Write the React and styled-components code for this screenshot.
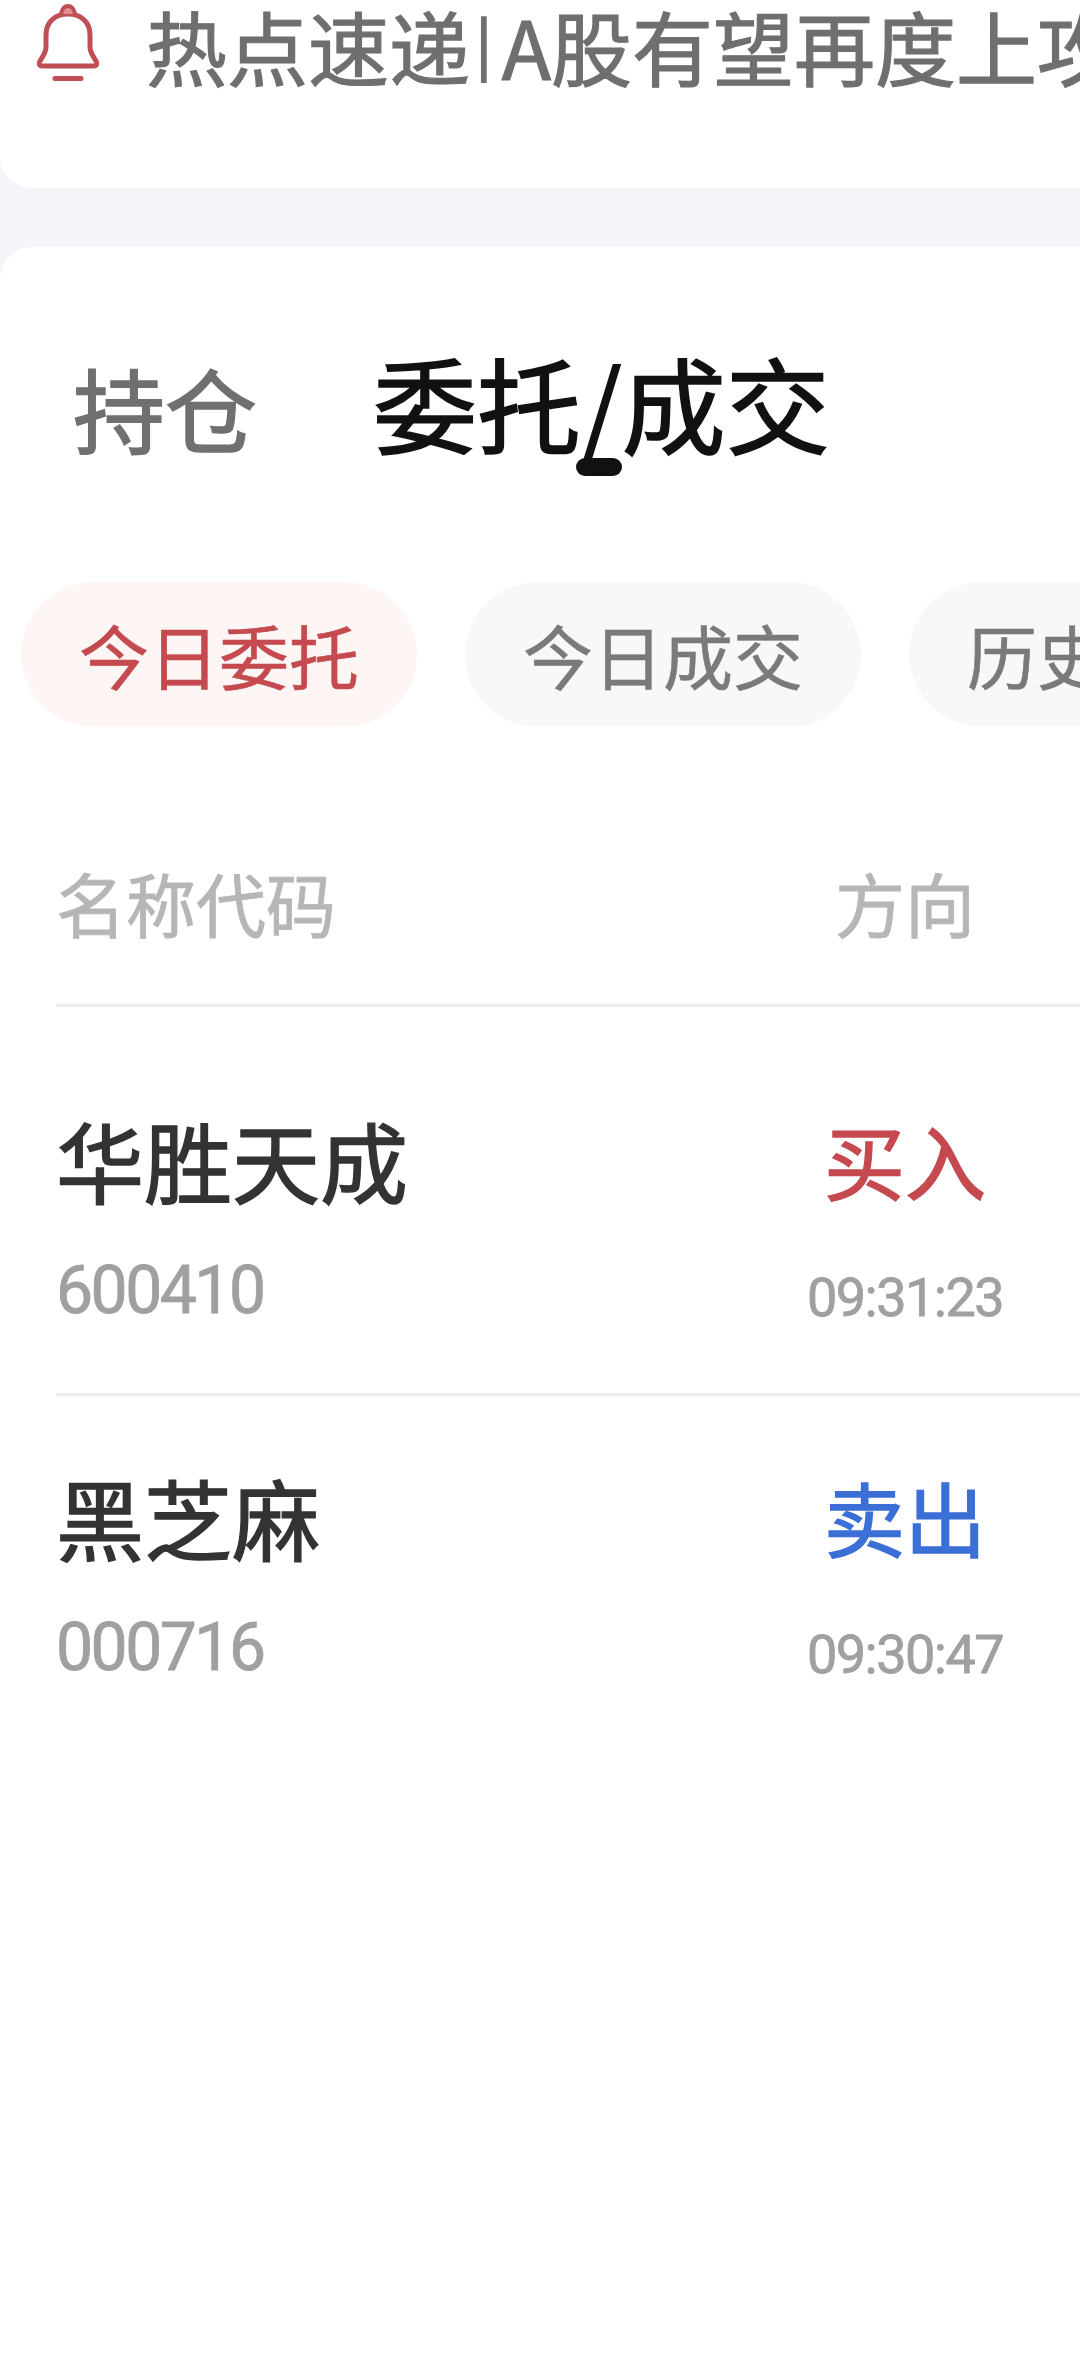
import styled, { createGlobalStyle } from 'styled-components';

const GlobalStyle = createGlobalStyle`
  html, body {
    margin: 0;
    padding: 0;
    background: #fff;
  }
  body {
    font-family: "Noto Sans CJK SC", "Noto Sans", sans-serif;
  }
`;

const Page = styled.div`
  width: 1080px;
  height: 2376px;
  overflow: hidden;
  background: #f3f5f9;
`;

const NoticeCard = styled.div`
  width: 1400px;
  height: 188px;
  box-sizing: border-box;
  padding: 3px 0 0 36px;
  display: flex;
  align-items: flex-start;
  gap: 46px;
  background: #fff;
  border-radius: 0 0 32px 32px;
`;

const Bell = styled.svg`
  width: 64px;
  height: 80px;
  flex: none;
`;

const NoticeText = styled.div`
  font-size: 81px;
  line-height: 84px;
  color: #6f6f6f;
  white-space: nowrap;
  -webkit-text-stroke: 1.2px #6f6f6f;
`;

const NoticeBar = styled.span`
  font-size: 58px;
  line-height: 0;
  margin: 0 10px 0 6px;
  vertical-align: 14px;
  -webkit-text-stroke: 2px #6f6f6f;
`;

const MainCard = styled.div`
  width: 1400px;
  height: 2200px;
  margin-top: 59px;
  background: #fff;
  border-radius: 32px 32px 0 0;
`;

const TabBar = styled.div`
  display: flex;
  align-items: baseline;
  gap: 116px;
  padding: 90px 0 0 73px;
  height: 335px;
  box-sizing: border-box;
`;

const Tab = styled.div`
  position: relative;
  font-size: ${(p) => (p.$active ? '104px' : '92px')};
  line-height: 130px;
  color: ${(p) => (p.$active ? '#111' : '#707070')};
  -webkit-text-stroke: 1.5px ${(p) => (p.$active ? '#111' : '#707070')};
`;

const Indicator = styled.span`
  position: absolute;
  left: 203px;
  bottom: -9px;
  width: 46px;
  height: 18px;
  border-radius: 9px;
  background: #111;
`;

const PillRow = styled.div`
  display: flex;
  gap: 48px;
  padding-left: 21px;
`;

const Pill = styled.div`
  flex: none;
  width: 396px;
  height: 145px;
  border-radius: 73px;
  display: flex;
  align-items: center;
  justify-content: center;
  font-size: 70px;
  background: ${(p) => (p.$active ? '#fdf6f4' : '#f8f8f8')};
  color: ${(p) => (p.$active ? '#c54a50' : '#7a7a7a')};
  -webkit-text-stroke: 0.6px ${(p) => (p.$active ? '#c54a50' : '#7a7a7a')};
`;

const Table = styled.div`
  margin: 98px 0 0 56px;
`;

const HeaderRow = styled.div`
  display: grid;
  grid-template-columns: 739px 220px;
  height: 182px;
  box-sizing: border-box;
  border-bottom: 3px solid #eeeeee;
  font-size: 70px;
  line-height: 156px;
  color: #b6b6b6;
  -webkit-text-stroke: 0.8px #b6b6b6;
`;

const Row = styled.div`
  display: grid;
  grid-template-columns: 739px 220px;
  height: ${(p) => p.$height}px;
  box-sizing: border-box;
  padding-top: ${(p) => p.$top}px;
  border-bottom: ${(p) => (p.$line ? '3px solid #eeeeee' : 'none')};
`;

const Cell = styled.div`
  display: flex;
  flex-direction: column;
`;

const DirectionCell = styled.div`
  display: flex;
  flex-direction: column;
  align-items: center;
`;

const HeadDirection = styled.div`
  text-align: center;
`;

const Name = styled.div`
  font-size: 88px;
  line-height: 100px;
  color: #333;
  -webkit-text-stroke: 1.4px #333;
`;

const Code = styled.div`
  margin-top: 46px;
  font-family: Roboto, "Liberation Sans", sans-serif;
  font-size: 66px;
  line-height: 72px;
  letter-spacing: -2.5px;
  color: #a0a0a0;
  -webkit-text-stroke: 0.8px #a0a0a0;
`;

const Direction = styled.div`
  font-size: 81px;
  line-height: 100px;
  color: ${(p) => (p.$side === 'buy' ? '#c54a50' : '#3b6fd6')};
  -webkit-text-stroke: 1.4px ${(p) => (p.$side === 'buy' ? '#c54a50' : '#3b6fd6')};
`;

const Time = styled.div`
  margin-top: 59px;
  font-family: Roboto, "Liberation Sans", sans-serif;
  font-size: 54px;
  line-height: 60px;
  letter-spacing: -1.5px;
  color: #a0a0a0;
  -webkit-text-stroke: 0.8px #a0a0a0;
`;

const orders = [
  { name: '华胜天成', code: '600410', side: 'buy', label: '买入', time: '09:31:23', height: 389, top: 102, line: true },
  { name: '黑芝麻', code: '000716', side: 'sell', label: '卖出', time: '09:30:47', height: 380, top: 70, line: false },
];

const App = () => (
  <Page>
    <GlobalStyle />
    <NoticeCard>
      <Bell viewBox="0 0 64 80" fill="none" stroke="#bf4f55" strokeWidth="5" strokeLinecap="round" strokeLinejoin="round">
        <path d="M32 11C18 11 10 20 10 32V44C10 50 6 54 3.5 59Q2.5 63 6 63H58Q61.5 63 60.5 59C58 54 54 50 54 44V32C54 20 46 11 32 11Z" />
        <path d="M25 11C26 6 28 3 32 3S38 6 39 11" fill="#e58c90" strokeWidth="4" />
        <path d="M19 75.5H45" />
      </Bell>
      <NoticeText>
        热点速递<NoticeBar>|</NoticeBar>A股有望再度上攻
      </NoticeText>
    </NoticeCard>
    <MainCard>
      <TabBar>
        <Tab>持仓</Tab>
        <Tab $active>
          委托/成交
          <Indicator />
        </Tab>
      </TabBar>
      <PillRow>
        <Pill $active>今日委托</Pill>
        <Pill>今日成交</Pill>
        <Pill>历史委托</Pill>
      </PillRow>
      <Table>
        <HeaderRow>
          <div>名称代码</div>
          <HeadDirection>方向</HeadDirection>
        </HeaderRow>
        {orders.map((o) => (
          <Row key={o.code} $height={o.height} $top={o.top} $line={o.line}>
            <Cell>
              <Name>{o.name}</Name>
              <Code>{o.code}</Code>
            </Cell>
            <DirectionCell>
              <Direction $side={o.side}>{o.label}</Direction>
              <Time>{o.time}</Time>
            </DirectionCell>
          </Row>
        ))}
      </Table>
    </MainCard>
  </Page>
);

export default App;
